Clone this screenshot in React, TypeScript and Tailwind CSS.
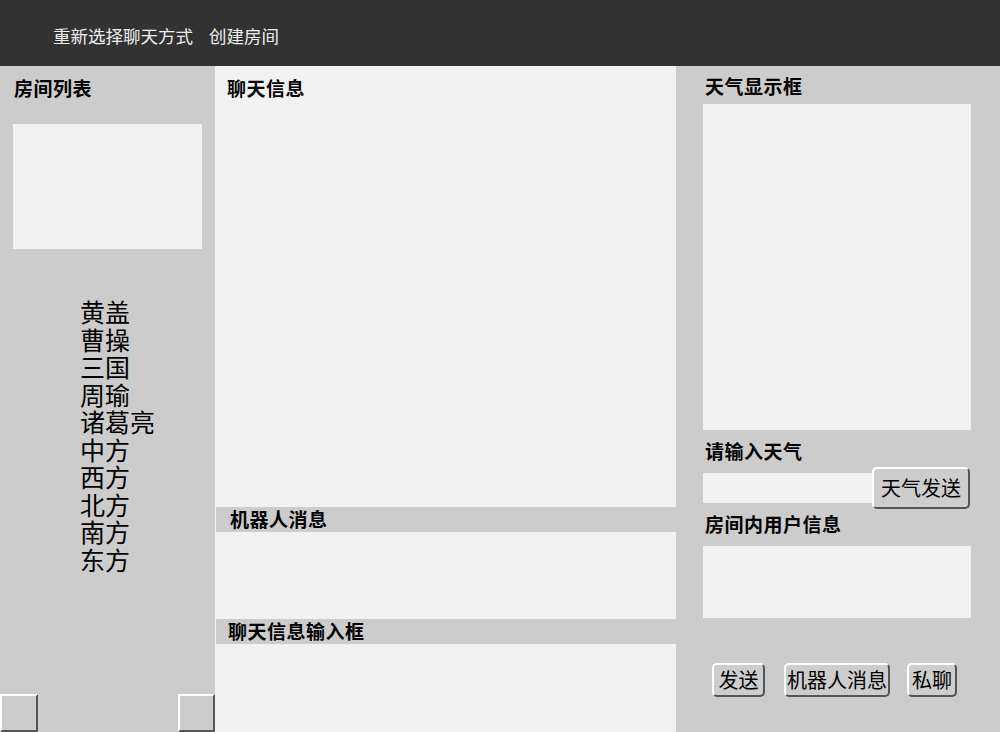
import React from "react";

const sans = { fontFamily: '"Noto Sans CJK SC", "Noto Sans", sans-serif' } as React.CSSProperties;

function BevelButton({ label, className = "" }: { label: string; className?: string }) {
  return (
    <button
      className={`flex items-center justify-center rounded-[5px] border-t-2 border-l-2 border-b-2 border-r-2 border-t-white border-l-white border-b-[#555555] border-r-[#555555] bg-[#cdcdcd] text-[20px] leading-none text-black ${className}`}
    >
      {label}
    </button>
  );
}

export default function App() {
  const names = ["黄盖", "曹操", "三国", "周瑜", "诸葛亮", "中方", "西方", "北方", "南方", "东方"];
  return (
    <div
      className="flex h-[732px] w-[1000px] flex-col overflow-hidden bg-[#cccccc]"
      style={{ fontFamily: '"Noto Sans CJK SC", "Noto Sans", sans-serif' }}
    >
      <div className="flex h-[66px] shrink-0 items-center gap-[16px] bg-[#323232] pl-[53px] pt-[7px] text-[17.5px] text-[#eeeeee]">
        <span>重新选择聊天方式</span>
        <span>创建房间</span>
      </div>
      <div className="flex flex-1">
        {/* left */}
        <div className="flex w-[215px] shrink-0 flex-col bg-[#cccccc]">
          <div className="pl-[14px] pt-[10px] text-[19px] font-bold leading-[24px] tracking-[0.5px] text-black">房间列表</div>
          <div className="ml-[13px] mt-[24px] h-[125px] w-[189px] bg-[#f2f2f2]" />
          <div className="mt-[49px] pl-[80px] text-[25px] leading-[27.5px] text-black" style={sans}>
            {names.map((n) => (
              <div key={n} className="h-[27.5px]">{n}</div>
            ))}
          </div>
          <div className="mt-auto flex justify-between">
            <div className="h-[38px] w-[38px] border-t-2 border-l-2 border-b-2 border-r-2 border-t-white border-l-white border-b-[#555555] border-r-[#555555] bg-[#cccccc]" />
            <div className="h-[38px] w-[37px] border-t-2 border-l-2 border-b-2 border-r-2 border-t-white border-l-white border-b-[#555555] border-r-[#555555] bg-[#cccccc]" />
          </div>
        </div>
        {/* middle */}
        <div className="flex w-[461px] shrink-0 flex-col bg-[#f2f2f2]">
          <div className="pl-[12px] pt-[10px] text-[19px] font-bold leading-[24px] tracking-[0.5px] text-black">聊天信息</div>
          <div className="flex-1" />
          <div className="ml-px flex h-[25px] items-center bg-[#cccccc] pl-[14px] text-[19px] font-bold tracking-[0.5px] text-black">机器人消息</div>
          <div className="h-[87px]" />
          <div className="ml-px flex h-[25px] items-center bg-[#cccccc] pl-[12px] text-[19px] font-bold tracking-[0.5px] text-black">聊天信息输入框</div>
          <div className="h-[88px]" />
        </div>
        {/* right */}
        <div className="flex flex-1 flex-col bg-[#cccccc] pl-[27px]">
          <div className="pl-[2px] pt-[8px] text-[19px] font-bold leading-[24px] tracking-[0.5px] text-black">天气显示框</div>
          <div className="mt-[6px] h-[326px] w-[268px] bg-[#f2f2f2]" />
          <div className="mt-[9px] pl-[2px] text-[19px] font-bold leading-[24px] tracking-[0.5px] text-black">请输入天气</div>
          <div className="mt-[4px] flex h-[42px] items-center">
            <div className="h-[30px] w-[169px] bg-[#f2f2f2]" />
            <BevelButton label="天气发送" className="h-[42px] w-[98px]" />
          </div>
          <div className="mt-[3px] pl-[2px] text-[19px] font-bold leading-[24px] tracking-[0.5px] text-black">房间内用户信息</div>
          <div className="mt-[10px] h-[72px] w-[268px] bg-[#f2f2f2]" />
          <div className="mt-[45px] flex items-center pl-[9px]">
            <BevelButton label="发送" className="h-[34px] w-[53px]" />
            <BevelButton label="机器人消息" className="ml-[19px] h-[34px] w-[106px]" />
            <BevelButton label="私聊" className="ml-[17px] h-[34px] w-[50px]" />
          </div>
        </div>
      </div>
    </div>
  );
}
